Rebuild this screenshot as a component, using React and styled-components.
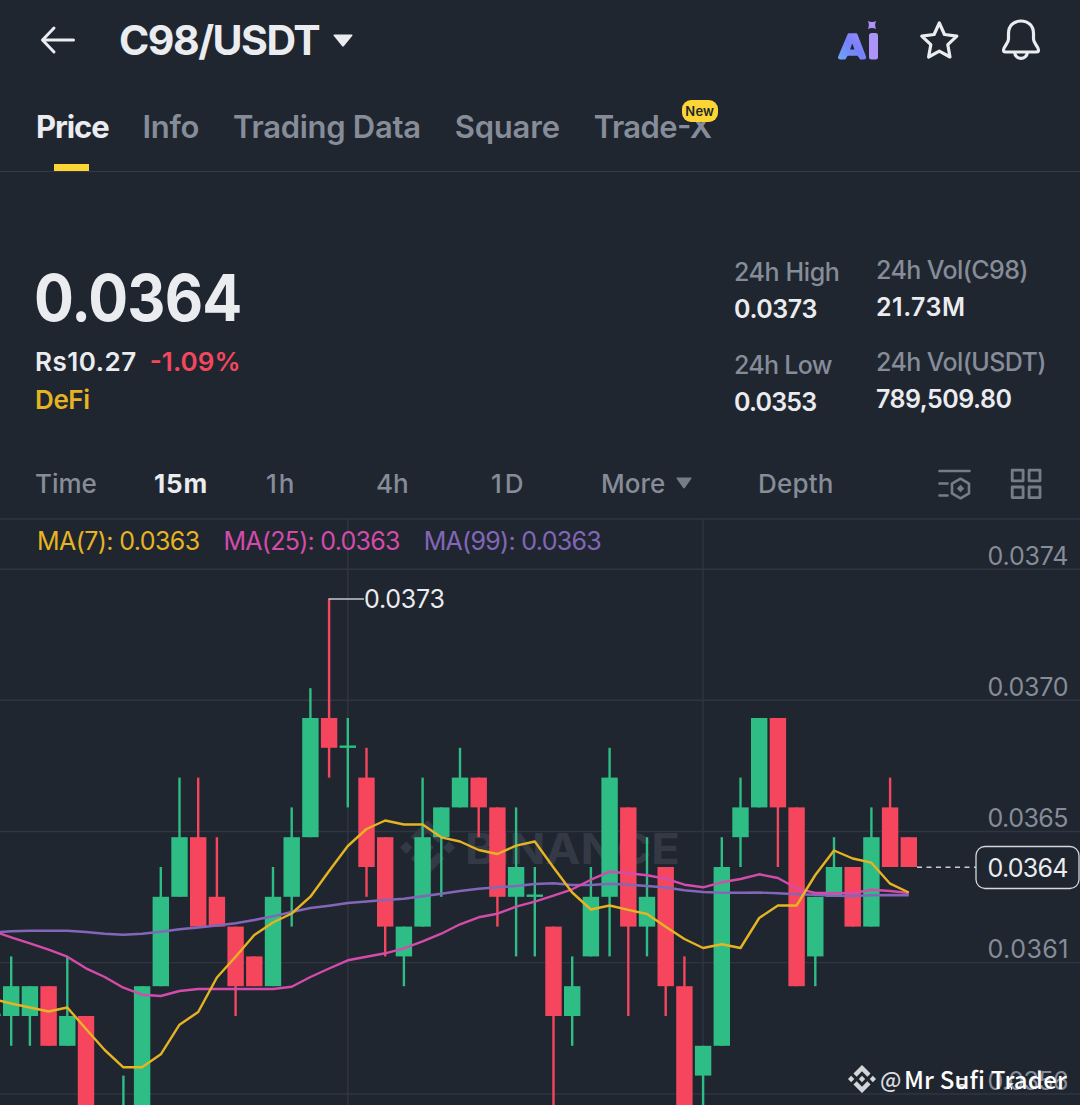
import React from 'react'
import styled, { createGlobalStyle } from 'styled-components'

const colors = {
    bg: '#1f2630',
    text: '#eaecef',
    muted: '#868c98',
    line: '#333b47',
    up: '#2ebd85',
    down: '#f6465d',
    yellow: '#fcd535',
    ma7: '#e6b422',
    ma25: '#d54bab',
    ma99: '#8466b8',
}

const GlobalStyle = createGlobalStyle`
    body {
        margin: 0;
        background: ${colors.bg};
        color: ${colors.text};
        font-family: Inter, "Liberation Sans", sans-serif;
        overflow: hidden;
    }
`

const Page = styled.main`
    width: 1080px;
    height: 1105px;
    overflow: hidden;
    display: flex;
    flex-direction: column;
`

const Header = styled.header`
    height: 80px;
    padding: 0 38px 0 39px;
    box-sizing: border-box;
    display: flex;
    align-items: center;
`

const Pair = styled.h1`
    margin: 0 14px 0 42px;
    font-size: 41px;
    line-height: 80px;
    font-weight: 700;
    letter-spacing: -1.5px;
`

const HeaderActions = styled.div`
    margin-left: auto;
    display: flex;
    align-items: center;
    gap: 40px;
`

const Tabs = styled.nav`
    height: 92px;
    padding: 0 36px;
    box-sizing: border-box;
    display: flex;
    align-items: stretch;
    gap: 34px;
    border-bottom: 1px solid ${colors.line};
`

const Tab = styled.a`
    position: relative;
    color: ${props => props.$active ? colors.text : colors.muted};
    font-size: 31px;
    line-height: 94px;
    font-weight: ${props => props.$active ? 700 : 600};
    letter-spacing: ${props => props.$spacing || -0.3}px;
    font-feature-settings: "case";
    white-space: nowrap;

    ${props => props.$active ? `
        &::after {
            content: '';
            background: ${colors.yellow};
            width: 35px;
            height: 7px;
            position: absolute;
            bottom: 0;
            left: 18px;
        }
    ` : ``}
`

const NewBadge = styled.span`
    position: absolute;
    top: 20px;
    left: 88px;
    width: 36px;
    height: 22px;
    border-radius: 9px;
    background: ${colors.yellow};
    color: #202630;
    font-size: 13px;
    line-height: 22px;
    font-weight: 600;
    letter-spacing: 0.2px;
    text-align: center;
`

const Summary = styled.section`
    height: 276px;
    padding: 0 0 0 35px;
    box-sizing: border-box;
    display: flex;
    justify-content: space-between;
`

const LastPrice = styled.div`
    margin-top: 88px;
    margin-left: -1px;
    font-size: 64px;
    line-height: 76px;
    font-weight: 700;
    letter-spacing: -1px;
    transform: scaleX(0.925);
    transform-origin: left;
`

const PriceRow = styled.div`
    margin-top: 7px;
    display: flex;
    gap: 13px;
    font-size: 26px;
    line-height: 38px;
    font-weight: 600;
    letter-spacing: 0.5px;
`

const Change = styled.span`
    color: ${colors.down};
    letter-spacing: 0.1px;
    font-feature-settings: "case";
`

const Category = styled.div`
    color: ${colors.ma7};
    font-size: 26px;
    line-height: 37px;
    font-weight: 600;
    letter-spacing: -0.4px;
`

const Stats = styled.div`
    width: 346px;
    padding-top: 80px;
    display: flex;
`

const StatColumn = styled.dl`
    width: ${props => props.width}px;
    margin: ${props => props.$top}px 0 0;
    white-space: nowrap;
`

const StatLabel = styled.dt`
    color: ${colors.muted};
    font-size: 25px;
    line-height: 37px;
    font-weight: 500;
    letter-spacing: ${props => props.$spacing}px;
`

const StatValue = styled.dd`
    margin: 0 0 19px;
    font-size: 25px;
    line-height: ${props => props.$lineHeight || 37}px;
    font-weight: 600;
    letter-spacing: ${props => props.$spacing}px;
`

const Toolbar = styled.div`
    height: 70px;
    padding: 0 38px 0 35px;
    box-sizing: border-box;
    display: flex;
    align-items: center;
`

const Interval = styled.a`
    width: ${props => props.width}px;
    padding-top: 2px;
    display: flex;
    align-items: center;
    gap: 11px;
    color: ${props => props.$active ? colors.text : colors.muted};
    font-size: 26px;
    line-height: 70px;
    font-weight: ${props => props.$active ? 700 : 500};
    letter-spacing: ${props => props.$spacing || 0}px;

    svg {
        margin-bottom: 3px;
    }
`

const ToolIcons = styled.div`
    margin-left: auto;
    display: flex;
    align-items: center;
    gap: 38px;
    padding-top: 1px;
    color: #767d89;
`

const ChartArea = styled.section`
    height: 587px;
    position: relative;
`

const Legend = styled.div`
    position: absolute;
    top: 5px;
    left: 37px;
    display: flex;
    gap: 24px;
    font-size: 25px;
    line-height: 37px;
`

const LegendItem = styled.span`
    color: ${props => props.color};
    letter-spacing: ${props => props.$spacing}px;
`

const Watermark = styled.div`
    position: absolute;
    left: 848px;
    top: 543px;
    display: flex;
    align-items: center;
    font-family: "Noto Sans CJK SC", sans-serif;
    font-size: 24px;
    line-height: 36px;
    font-weight: 500;
    letter-spacing: 0.2px;
    color: #fff;
    white-space: nowrap;
`

const Mention = styled.span`
    width: 24px;
    margin-left: 4px;
    color: #d9dbde;
    font-size: 22px;
    line-height: 34px;
    padding-bottom: 2px;
`

const Author = styled.span`
    position: relative;
`

const AuthorMarks = styled.svg`
    position: absolute;
    left: 51px;
    top: 16px;
`

const STEP = 18.7
const TICK = 29.8
const x = i => 11.2 + STEP * i
const y = n => 200 + TICK * n

// [index, direction, body top, body bottom, high, low] in ticks below 0.0369
const candles = [
    [-1, 'up', 10, 10, 10, 10],
    [0, 'up', 9, 10, 8, 11],
    [1, 'up', 9, 10, 9, 11],
    [2, 'down', 9, 11, 9, 11],
    [3, 'up', 10, 11, 8, 11],
    [4, 'down', 10, 15, 10, 15],
    [6, 'up', 14, 15, 12, 15],
    [7, 'up', 9, 15, 9, 15],
    [8, 'up', 6, 9, 5, 9],
    [9, 'up', 4, 6, 2, 6],
    [10, 'down', 4, 7, 2, 7],
    [11, 'down', 6, 7, 4, 7],
    [12, 'down', 7, 9, 7, 10],
    [13, 'down', 8, 9, 8, 9],
    [14, 'up', 6, 9, 5, 9],
    [15, 'up', 4, 6, 3, 7],
    [16, 'up', 0, 4, -1, 4],
    [17, 'down', 0, 1, -4, 2],
    [18, 'up', 1, 1, 0, 3],
    [19, 'down', 2, 5, 1, 6],
    [20, 'down', 4, 7, 4, 8],
    [21, 'up', 7, 8, 7, 9],
    [22, 'up', 4, 7, 2, 7],
    [23, 'up', 3, 4, 3, 6],
    [24, 'up', 2, 3, 1, 3],
    [25, 'down', 2, 3, 2, 4],
    [26, 'down', 3, 6, 3, 7],
    [27, 'up', 5, 6, 3, 8],
    [28, 'up', 6, 6, 5, 8],
    [29, 'down', 7, 10, 7, 15],
    [30, 'up', 9, 10, 8, 11],
    [31, 'up', 6, 8, 5, 8],
    [32, 'up', 2, 6, 1, 8],
    [33, 'down', 3, 7, 3, 10],
    [34, 'up', 6, 7, 4, 8],
    [35, 'down', 5, 9, 5, 10],
    [36, 'down', 9, 15, 8, 15],
    [37, 'up', 11, 12, 11, 15],
    [38, 'up', 5, 11, 4, 11],
    [39, 'up', 3, 4, 2, 5],
    [40, 'up', 0, 3, 0, 3],
    [41, 'down', 0, 3, 0, 5],
    [42, 'down', 3, 9, 3, 9],
    [43, 'up', 6, 8, 6, 9],
    [44, 'up', 5, 6, 4, 6],
    [45, 'down', 5, 7, 5, 7],
    [46, 'up', 4, 7, 3, 7],
    [47, 'down', 3, 5, 2, 5],
    [48, 'down', 4, 5, 4, 5],
]

// one value per candle, starting from the one cut off at the left edge
const ma7 = [
    999, 1003.5, 1007.5, 1011.5, 1007.5, 1029, 1050, 1067.3, 1067.3, 1054.3, 1024.7, 1012, 977.5,
    956.7, 935, 922.5, 913.5, 896.7, 871, 846, 829, 820.5, 824.5, 824.5, 837.3, 841.5,
    850, 854, 845.7, 841.5, 867.5, 892.5, 909.5, 905.5, 909.8, 914, 926.7, 939, 948,
    944.3, 948, 918, 905.5, 905.5, 875, 850.5, 858.5, 862.7, 883.7, 892.5,
]
const ma25 = [
    931, 937.3, 943.3, 949.7, 956.7, 968.3, 977, 987.7, 994.7, 996, 991, 989, 989,
    989, 989, 989, 986.7, 977, 968.5, 960.3, 956.7, 953.3, 948.3, 941.3, 933.7, 924.3,
    917.3, 913.7, 906.7, 901.7, 895.7, 889.3, 879.7, 871.7, 873.3, 875.3, 878.7, 884.7, 887.3,
    882.3, 879, 874.3, 878, 888.3, 893, 893, 893.3, 889.7, 891, 893,
]
const ma99 = [
    932.5, 931.3, 930.7, 930.7, 930.7, 932, 933.7, 934.7, 933.7, 931.7, 929.3, 927.5, 925.5,
    923.3, 920, 916.3, 912, 908, 905.7, 903, 901.5, 900, 898.7, 896.3, 893.7, 891,
    888.7, 887.3, 886, 884, 883.3, 885, 885, 883.7, 884.7, 886, 887.5, 890.3, 892,
    892.7, 892.7, 892.5, 893.3, 894.3, 894.7, 895.7, 896, 895.3, 895, 895.3,
]

const toPoints = values => values.map((v, i) => `${x(i - 1)},${v - 518}`).join(' ')

const priceLabels = [
    ['0.0374', 51],
    ['0.0370', 182.5],
    ['0.0365', 313.5],
    ['0.0361', 444.5],
    ['0.0356', 576],
]

const ArrowLeft = () => (
    <svg width="38" height="30" viewBox="0 0 38 30" fill="none" stroke="currentColor" strokeWidth="3" strokeLinecap="round" strokeLinejoin="round">
        <path d="M34.500 15H3.500M15 3L3.500 15L15 27" />
    </svg>
)

const Caret = ({ width, height, color }) => (
    <svg width={width} height={height} viewBox="0 0 20 13" preserveAspectRatio="none">
        <path d="M1 .5H19Q20 .7 19.300 1.700L11 12Q10 13 9 12L.7 1.700Q0 .7 1 .5Z" fill={color} />
    </svg>
)

const AiIcon = () => (
    <svg width="42" height="42" viewBox="0 0 42 42">
        <defs>
            <linearGradient id="ai" x1="0" y1="1" x2="1" y2="0">
                <stop offset="0" stopColor="#6fa3f7" />
                <stop offset=".5" stopColor="#7680fb" />
                <stop offset="1" stopColor="#9a8afa" />
            </linearGradient>
        </defs>
        <path
            d="M12.800 15.500H20.200L29 38.200Q29 39.200 28 39.200H24.800L22.200 35.500H11L8.800 39.200H4.200Q3 39.200 3.200 38.200ZM16.300 20.500L12.500 31.700H20.100Z"
            fill="url(#ai)"
            stroke="url(#ai)"
            strokeWidth="2.400"
            strokeLinejoin="round"
            fillRule="evenodd"
        />
        <rect x="33" y="14" width="9" height="26.500" rx="2.500" fill="#ad94f8" />
        <path d="M31.800 2Q36 4 40.200 2Q38 6 40.200 10Q36 8 31.800 10Q34 6 31.800 2Z" fill="#b291f5" />
    </svg>
)

const StarIcon = () => (
    <svg width="42" height="42" viewBox="0 0 42 42" fill="none" stroke="currentColor" strokeWidth="3.200" strokeLinejoin="round">
        <path d="M21.300 4L26.500 15.500L38.800 17.100L29.800 25.700L32 38L21.300 32.100L10.600 38L12.800 25.700L3.800 17.100L16.100 15.500Z" />
    </svg>
)

const BellIcon = () => (
    <svg width="42" height="44" viewBox="0 0 42 44" fill="none" stroke="currentColor" strokeWidth="3.200" strokeLinejoin="round">
        <path d="M21 3C13.500 3 8.500 8 8.500 15.500V21C8.500 25.500 3.500 28.500 3.500 32Q3.500 34 5.500 34H36.500Q38.500 34 38.500 32C38.500 28.500 33.500 25.500 33.500 21V15.500C33.500 8 28.500 3 21 3Z" />
        <path d="M14.500 34C15.500 42.500 26.500 42.500 27.500 34" />
    </svg>
)

const IndicatorIcon = () => (
    <svg width="34" height="34" viewBox="0 0 34 34" fill="none" stroke="currentColor" strokeWidth="2.600">
        <path d="M1.500 4H31.500M1.500 16.500H9.500M1.500 28.500H9.500" strokeLinecap="round" />
        <path d="M22.500 11.700L31 16.600V26.400L22.500 31.300L14 26.400V16.600Z" strokeLinejoin="round" />
        <path d="M22.500 17.800L26.200 21.500L22.500 25.200L18.800 21.500Z" fill="currentColor" stroke="none" />
    </svg>
)

const GridIcon = () => (
    <svg width="32" height="32" viewBox="0 0 32 32" fill="none" stroke="currentColor" strokeWidth="2.800" strokeLinejoin="round">
        <path d="M2.200 2.200H13.100V12.800H2.200ZM19.100 2.200H30V12.800H19.100ZM2.200 19H13.100V29.600H2.200ZM19.100 19H30V29.600H19.100Z" />
    </svg>
)

const binanceMark = 'M12 0L19.300 7.300L16.600 10L12 5.400L7.400 10L4.700 7.300ZM2.700 9.300L5.400 12L2.700 14.700L0 12ZM12 9.300L14.700 12L12 14.700L9.300 12ZM21.300 9.300L24 12L21.300 14.700L18.600 12ZM7.400 14L12 18.600L16.600 14L19.300 16.700L12 24L4.700 16.700Z'

const Candle = ({ data: [i, dir, top, bottom, high, low] }) => (
    <g fill={colors[dir]}>
        <rect x={x(i) - 1.2} y={y(high)} width="2.4" height={y(low) - y(high)} />
        <rect
            x={x(i) - 8.2}
            y={top === bottom ? y(top) - 2.3 : y(top)}
            width="16.4"
            height={top === bottom ? 2.4 : y(bottom) - y(top)}
        />
    </g>
)

const Chart = () => (
    <svg width="1080" height="587" viewBox="0 0 1080 587" fontFamily="Inter, sans-serif">
        <g stroke="#303641" strokeWidth="1.4">
            {[1, 51.3, 182.3, 313.5, 444.6, 576].map(v => <path key={v} d={`M0 ${v}H1080`} />)}
            <path d="M347.800 1V587M703 1V587" />
        </g>
        <g fill="#343a45">
            <path transform="translate(400 302) scale(2.3)" d={binanceMark} />
            <text x="465" y="346" fontSize="43" fontWeight="700" textLength="215" lengthAdjust="spacingAndGlyphs">BINANCE</text>
        </g>
        {candles.map(c => <Candle key={c[0]} data={c} />)}
        <g fill="none" strokeWidth="2.4" strokeLinejoin="round">
            <polyline points={toPoints(ma99)} stroke={colors.ma99} />
            <polyline points={toPoints(ma25)} stroke={colors.ma25} />
            <polyline points={toPoints(ma7)} stroke={colors.ma7} />
        </g>
        <path d="M328.500 81H364" stroke="#c4c7cc" strokeWidth="1.6" />
        <text x="364" y="90.4" fontSize="25" fill={colors.text} textLength="81">0.0373</text>
        <path d="M917 349.300H976" stroke="#c9ccd1" strokeWidth="1.4" strokeDasharray="5 4.500" />
        {priceLabels.map(([label, v]) => (
            <text key={label} x="987.5" y={v - 4.5} fontSize="25" fill={colors.muted} textLength="81">{label}</text>
        ))}
        <rect x="976" y="328.5" width="103" height="42" rx="9" fill={colors.bg} stroke="#d5d7db" strokeWidth="1.3" />
        <text x="987.5" y="359" fontSize="25" fill={colors.text} textLength="81">0.0364</text>
    </svg>
)

export default () => (
    <>
        <GlobalStyle />
        <Page>
            <Header>
                <ArrowLeft />
                <Pair>C98/USDT</Pair>
                <Caret width={20} height={13} color={colors.text} />
                <HeaderActions>
                    <AiIcon />
                    <StarIcon />
                    <BellIcon />
                </HeaderActions>
            </Header>
            <Tabs>
                <Tab $active $spacing={-1.1}>Price</Tab>
                <Tab>Info</Tab>
                <Tab>Trading Data</Tab>
                <Tab $spacing={-0.2}>Square</Tab>
                <Tab $spacing={-0.6}>Trade-X<NewBadge>New</NewBadge></Tab>
            </Tabs>
            <Summary>
                <div>
                    <LastPrice>0.0364</LastPrice>
                    <PriceRow>
                        <span>Rs10.27</span>
                        <Change>-1.09%</Change>
                    </PriceRow>
                    <Category>DeFi</Category>
                </div>
                <Stats>
                    <StatColumn width={142} $top={2}>
                        <StatLabel $spacing={-0.4}>24h High</StatLabel>
                        <StatValue $spacing={-0.4}>0.0373</StatValue>
                        <StatLabel $spacing={-0.7}>24h Low</StatLabel>
                        <StatValue $spacing={-0.8}>0.0353</StatValue>
                    </StatColumn>
                    <StatColumn width={204} $top={0}>
                        <StatLabel $spacing={-0.6}>24h Vol(C98)</StatLabel>
                        <StatValue $spacing={0.5} $lineHeight={36}>21.73M</StatValue>
                        <StatLabel $spacing={-0.6}>24h Vol(USDT)</StatLabel>
                        <StatValue $spacing={-0.5}>789,509.80</StatValue>
                    </StatColumn>
                </Stats>
            </Summary>
            <Toolbar>
                <Interval width={119}>Time</Interval>
                <Interval width={112} $active $spacing={0.8}>15m</Interval>
                <Interval width={110} $spacing={2}>1h</Interval>
                <Interval width={115}>4h</Interval>
                <Interval width={110} $spacing={3}>1D</Interval>
                <Interval width={157}>
                    More
                    <Caret width={16} height={12} color="#767d89" />
                </Interval>
                <Interval width={90} $spacing={0.2}>Depth</Interval>
                <ToolIcons>
                    <IndicatorIcon />
                    <GridIcon />
                </ToolIcons>
            </Toolbar>
            <ChartArea>
                <Chart />
                <Legend>
                    <LegendItem color={colors.ma7} $spacing={-0.6}>MA(7): 0.0363</LegendItem>
                    <LegendItem color={colors.ma25} $spacing={-0.75}>MA(25): 0.0363</LegendItem>
                    <LegendItem color={colors.ma99} $spacing={-0.7}>MA(99): 0.0363</LegendItem>
                </Legend>
                <Watermark>
                    <svg width="28" height="28" viewBox="0 0 24 24"><path d={binanceMark} fill="#d3d5d9" /></svg>
                    <Mention>@</Mention>
                    <Author>
                        Mr Sufi Trader
                        <AuthorMarks width="64" height="14" viewBox="0 0 64 14" fill="none" stroke="#fff" strokeWidth="1.3">
                            <path d="M2 2H12M3.500 9Q7 6.500 10.500 9Q10 12 6 11.500Q3 11 3.500 9" />
                            <path d="M52 7H57L54 9.500Q58 10 56 12.500" />
                        </AuthorMarks>
                    </Author>
                </Watermark>
            </ChartArea>
        </Page>
    </>
)
